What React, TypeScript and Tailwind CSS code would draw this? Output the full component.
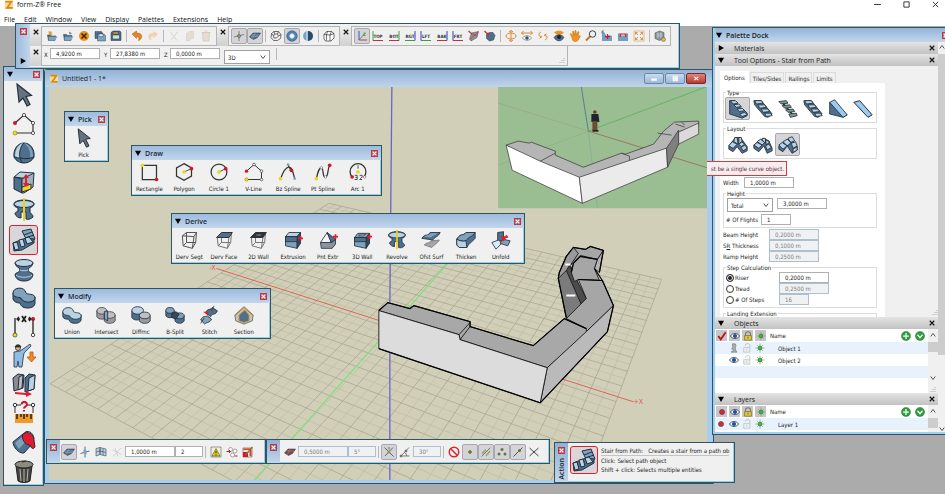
import React from "react";

type Kids = { children?: React.ReactNode };

const K = "#22303b";
const B1 = "#4f6f8c";
const B2 = "#7fa2bf";
const B3 = "#b9d2e4";

/* ---------- icon artwork, all on a 24 x 24 board ---------- */

const art: Record<string, React.ReactNode> = {
  arrow: <path d="M5 1l2 18 4-4 4 8 3-1.500-4-8 5.500-1z" fill="#66737f" stroke={K} strokeWidth="1.200" />,
  vline: (
    <g fill="none" stroke="#333" strokeWidth="1.200">
      <path d="M3 11L12 3l9 8v10H3" />
      <g strokeWidth=".8"><circle cx="12" cy="3" r="1.600" fill="#fff" /><circle cx="21" cy="11" r="1.600" fill="#fff" /><circle cx="21" cy="21" r="1.600" fill="#fff" /></g>
      <circle cx="3" cy="11" r="2" fill="#d4142a" stroke="none" /><circle cx="3" cy="21" r="2" fill="#f0e020" stroke="#887a00" strokeWidth=".6" />
    </g>
  ),
  dome: (
    <g stroke={K} strokeWidth="1">
      <path d="M2 16C1 8 6 2 12 2s11 6 10 14c-2 4-6 6-10 6S4 20 2 16z" fill={B1} />
      <path d="M3 15c0-7 4-12 8-13-3 4-4 10-3 15-2 0-3-1-5-2z" fill={B3} stroke="none" />
      <path d="M12 2c5 4 7 9 6 15 2 0 3-1 3-2 0-7-4-12-9-13z" fill={B2} stroke="none" />
      <path d="M12 2c-4 4-5 10-4 15 5 1 9 1 14-1M2 16c2 1 4 1 6 1 1 3 2 4 3 5" fill="none" />
    </g>
  ),
  cube: (
    <g stroke={K} strokeWidth="1">
      <path d="M2 7l6-5 14 1-4 6z" fill={B3} /><path d="M2 7l8 2v14l-8-4z" fill={B1} /><path d="M10 9l12-6-1 14-9 6-2 0z" fill="#9db4c6" />
      <path d="M10 17l9-3v5l-9 3z" fill="#ffcf20" /><path d="M11 8l3-4 3 4h-2v5h2l-3 4-3-4h2V8z" fill="#e21b2d" stroke="none" />
    </g>
  ),
  revolve: (
    <g stroke={K} strokeWidth="1">
      <path d="M2 6c0-2 4-4 10-4s10 2 10 4c0 3-3 3-4 4v5c2 1 3 2 3 4-2 2-5 3-7 2v-7H9v6c-3 0-5-2-6-4 0-2 2-2 3-3v-3C4 9 2 9 2 6z" fill={B1} />
      <ellipse cx="12" cy="6" rx="10" ry="3.500" fill={B3} /><path d="M12 0v23" stroke="#e8d31a" strokeWidth="2" />
    </g>
  ),
  stairs: (
    <g stroke={K} strokeWidth="1">
      <path d="M10 3l9-2 4 10-7 4z" fill={B2} /><path d="M12 7l8-3M13 10l9-3" />
      <path d="M1 15l13-5 8 1v4L10 22l-8 1z" fill={B1} />
      <path d="M1 15l4-1 2 7-4 1zM7 12l4-1 2 7-4 1zM13 10l4-1 4 5-6 2z" fill={B3} />
    </g>
  ),
  vase: (
    <g stroke={K} strokeWidth="1">
      <path d="M3 5c0 4 5 4 5 7S3 14 3 17c1 4 4 6 9 6s8-2 9-6c0-3-5-2-5-5s5-3 5-7z" fill={B1} />
      <ellipse cx="12" cy="5" rx="9" ry="3.500" fill={B3} /><path d="M4 17c3 3 13 3 16 0M8 12c2 1 6 1 8 0" fill="none" stroke={B3} />
    </g>
  ),
  blob: (
    <g stroke={K} strokeWidth="1">
      <path d="M1 7v6c1 3 4 4 7 4 1 4 4 5 8 5s7-2 7-5v-6z" fill={B1} />
      <path d="M1 7c0-6 12-7 13 0 1 2 9 0 9 5s-12 6-14 0C7 11 1 12 1 7z" fill={B2} />
    </g>
  ),
  dims: (
    <g stroke="#222" strokeWidth="1.300" fill="none">
      <path d="M3 3v18M21 3v18M5 4h3M16 4h3M7 2L5 4l2 2M17 2l2 2-2 2" /><path d="M10 1l4 6M14 1l-4 6" strokeWidth="1.800" />
      <circle cx="21" cy="4" r="2" fill="#c8102e" stroke="none" /><circle cx="3" cy="20" r="2" fill="#f0e020" strokeWidth=".6" /><circle cx="21" cy="20" r="1.700" fill="#fff" strokeWidth=".8" />
    </g>
  ),
  person: (
    <g stroke={K} strokeWidth=".8">
      <path d="M2 8l6-1 6-4 4-3 1 2-7 7-1 6-1 8H7l-1-6-1 6H2z" fill="#8fbce6" /><circle cx="6" cy="4" r="2.500" fill="#e5b48c" /><path d="M3 3c1-3 5-3 6 0z" fill="#3a2415" />
      <path d="M18 8h3v5h3l-4.500 5-4.500-5h3z" fill="#f08a24" stroke="#b85a08" />
    </g>
  ),
  slabs: (
    <g stroke={K} strokeWidth="1">
      <path d="M1 5l5-4 6 1-1 13-9 3z" fill="#8d8a94" /><path d="M7 4l4-2-1 13-4 2z" fill="#c1bec8" />
      <path d="M13 5l4-4 6 1-1 14-9 3z" fill={B1} /><path d="M17 5l6-3-1 14-6 2z" fill={B3} /><path d="M3 19l11 1v-2l6 3-6 3v-2l-11-1z" fill="#e21b2d" stroke="none" />
    </g>
  ),
  measure: (
    <g>
      <path d="M3 4v8M21 4v8M4 4h5M15 4h5" stroke="#333" fill="none" /><circle cx="3" cy="4" r="1.700" fill="#fff" stroke="#333" /><circle cx="21" cy="4" r="1.700" fill="#fff" stroke="#333" />
      <path d="M9.500 3.500c0-3.500 5.500-3.500 5.500 0 0 2-3 2-3 4M12 9v1.500" stroke="#d4142a" strokeWidth="2" fill="none" />
      <path d="M3 13h18v9H3z" fill="#f09a28" /><path d="M5 13v5M9 13v3M12 13v5M15 13v3M19 13v5" stroke="#222" strokeWidth="1.500" />
    </g>
  ),
  bucket: (
    <g stroke={K} strokeWidth="1">
      <path d="M1 12L11 4l9 10-8 9C7 24 1 17 1 12z" fill={B1} /><path d="M3 13l8-7 4 4-8 9z" fill={B2} stroke="none" />
      <path d="M11 4c4-4 11 0 11 6l1 7c-2 3-4 1-5-2-5 0-9-6-7-11z" fill="#e21b2d" /><path d="M12 4c1-4 9-4 10 5" fill="none" />
    </g>
  ),
  trash: (
    <g stroke="#222" strokeWidth="1">
      <path d="M4 7l2 15c3 2 9 2 12 0l2-15z" fill="#45433f" /><path d="M8 10l1 12M12 10v13M16 10l-1 12" stroke="#bbb8b0" /><ellipse cx="12" cy="5.500" rx="9" ry="3.500" fill="#8d8a80" /><path d="M10 3l4-1" />
    </g>
  ),
  rect: (
    <g><path d="M4 4h17v17H4z" fill="none" stroke="#333" strokeWidth="1.500" /><circle cx="4" cy="4" r="2.200" fill="#e6d81c" /><circle cx="21" cy="21" r="2.200" fill="#d4142a" /></g>
  ),
  polygon: (
    <g><path d="M12 2l9 5v10l-9 5-9-5V7z" fill="none" stroke="#333" strokeWidth="1.500" /><path d="M12 12l9-4" stroke="#333" /><circle cx="12" cy="12" r="2.200" fill="#e6d81c" /><circle cx="21" cy="8" r="2.200" fill="#d4142a" /></g>
  ),
  circle: (
    <g><circle cx="12" cy="12" r="9.500" fill="none" stroke="#333" strokeWidth="1.500" /><path d="M12 12l8-4" stroke="#333" /><circle cx="12" cy="12" r="2.200" fill="#e6d81c" /><circle cx="20" cy="8" r="2.200" fill="#d4142a" /></g>
  ),
  bz: (
    <g><path d="M3 20C6 12 9 6 13 6s5 6 7 14M12 3l4 8" fill="none" stroke="#333" strokeWidth="1.500" /><circle cx="3" cy="20" r="2.200" fill="#e6d81c" /><circle cx="16" cy="10" r="2.200" fill="#d4142a" /><circle cx="12" cy="3" r="1.600" fill={B2} /><circle cx="20" cy="20" r="1.600" fill={B2} /></g>
  ),
  pt: (
    <g><path d="M4 20C6 12 7 7 10 7s1 12 5 11 2-10 5-14" fill="none" stroke="#333" strokeWidth="1.500" /><circle cx="4" cy="20" r="2.200" fill="#e6d81c" /><circle cx="20" cy="4" r="2.200" fill="#d4142a" /><circle cx="10" cy="7" r="1.500" fill="#fff" stroke="#666" strokeWidth=".7" /><circle cx="15" cy="18" r="1.500" fill="#fff" stroke="#666" strokeWidth=".7" /></g>
  ),
  arc: (
    <g><path d="M5 18a9.500 9.500 0 1 1 14 0" fill="none" stroke="#333" strokeWidth="1.500" /><path d="M12 4v4M8 16h3v5H8M9 18.500h2M14 16h3v2l-3 3h3" stroke="#333" fill="none" /><circle cx="12" cy="12" r="2.200" fill="#e6d81c" /><circle cx="5" cy="18" r="2.200" fill="#d4142a" /><circle cx="20" cy="18" r="1.500" fill="#fff" stroke="#666" strokeWidth=".7" /></g>
  ),
  wire: <path d="M4 7l5-4h12l-3 5zM4 7l1 12 11 3 2-14M16 22l4-7 1-12M9 3v12l-4 4M9 15l11 0" fill="none" stroke="#555" strokeWidth="1.200" />,
  face: (
    <g stroke="#333" strokeWidth="1.200" fill="none"><path d="M4 9l1 10 11 3 2-13M16 22l4-7 1-12M9 9v6l-4 4M9 15h11" stroke="#777" /><path d="M3 9l6-6h13l-4 6z" fill={B1} /></g>
  ),
  wall2: (
    <g stroke="#333" strokeWidth="1.200" fill="none"><path d="M4 9l1 10 11 3 2-13M16 22l4-7 1-12M9 9v6l-4 4M9 15h11" stroke="#777" /><path d="M3 9l6-6h13l-4 6z" fill="#26333d" /><path d="M9 7l2-2h6l-2 2z" fill="#fff" /></g>
  ),
  extr: (
    <g stroke={K} strokeWidth="1"><path d="M3 8l4-5h14l-4 5z" fill={B3} /><path d="M3 8h14v14L3 19z" fill={B2} /><path d="M17 8l4-5v13l-4 6z" fill="#34495c" /><path d="M3 8h14v6H3z" fill={B1} /><path d="M21 7v6M18 10h6" stroke="#e21b2d" strokeWidth="2" /></g>
  ),
  pnt: (
    <g stroke={K} strokeWidth="1"><path d="M3 15h14l4-4v6l-4 5H4z" fill="#8a959f" /><path d="M11 3L3 15h13z" fill="#f3f5f7" /><path d="M11 3l5 12 5-4z" fill={B1} /><path d="M21 5v6M18 8h6" stroke="#e21b2d" strokeWidth="2" /></g>
  ),
  wall3: (
    <g stroke={K} strokeWidth="1"><path d="M3 9l4-5h14l-4 5z" fill={B2} /><path d="M3 9h14v13L3 19z" fill={B2} /><path d="M17 9l4-5v12l-4 6z" fill="#34495c" /><path d="M3 9h14v5H3z" fill={B1} /><path d="M8 7l2-2h6l-2 2z" fill="#fff" /><path d="M21 5v6M18 8h6" stroke="#e21b2d" strokeWidth="2" /></g>
  ),
  ofst: (
    <g stroke={K} strokeWidth="1"><path d="M4 18c4-5 4 0 8-5l10-1c-3 5-5 4-9 9z" fill="#a5a5ad" stroke="#777" /><path d="M1 10c5-7 6-1 10-7l12 0c-3 6-5 4-9 9z" fill={B1} /><path d="M4 8c3-2 5-1 8-4h8c-3 3-5 2-8 5z" fill={B2} stroke="none" /></g>
  ),
  thick: (
    <g stroke={K} strokeWidth="1"><path d="M1 11c5-8 7-3 11-8h11v7c-4 5-6 4-10 11H4l-3-3z" fill={B1} /><path d="M1 11c5-8 7-3 11-8h11c-4 6-7 4-11 10-4 1-8 0-11-2z" fill={B2} /><path d="M1 11c3 2 7 3 11 2l1 8H4l-3-3z" fill={B3} /></g>
  ),
  unfold: (
    <g stroke={K} strokeWidth="1"><path d="M8 3l7-1v10l-7 2z" fill={B1} /><path d="M1 15l8-3 4 4-7 7z" fill="#dcebf4" /><path d="M14 11l9 2-3 6-9-3z" fill={B2} /><path d="M19 6l-4 2-3-1 2 7 4-3-1-1 4-1z" fill="#e21b2d" stroke="none" /></g>
  ),
  union: (
    <g stroke={K} strokeWidth="1"><path d="M1 8v6c1 3 4 3 7 3 1 4 4 5 8 5s7-2 7-5v-5z" fill={B1} /><path d="M1 8c0-6 12-7 13 0 1 2 9 0 9 5s-12 6-14 0C7 12 1 13 1 8z" fill={B3} /></g>
  ),
  inter: (
    <g stroke="#444" strokeWidth="1"><path d="M1 7v7c2 4 10 4 12 0V7z" fill="#9a9aa2" /><ellipse cx="7" cy="7" rx="6" ry="4" fill="#bfbfc5" /><path d="M10 12v7c2 4 11 4 13 0v-7z" fill="#9a9aa2" /><ellipse cx="16.500" cy="12" rx="6.500" ry="4" fill="#bfbfc5" /><path d="M10 8l4-1v12l-4-2z" fill={B2} stroke={K} /></g>
  ),
  diff: (
    <g stroke={K} strokeWidth="1"><path d="M1 7v8c2 4 10 4 12 0V7z" fill={B1} /><ellipse cx="8" cy="6.500" rx="7" ry="4.500" fill={B3} /><path d="M10 13v6c2 4 11 4 13 0v-6z" fill="#9a9aa2" /><ellipse cx="16.500" cy="12.500" rx="6.500" ry="4" fill="#bfbfc5" /></g>
  ),
  split: (
    <g stroke={K} strokeWidth="1"><path d="M1 7v6c2 3 8 3 10 0V7z" fill={B1} /><ellipse cx="6" cy="6.500" rx="5" ry="3.500" fill={B2} /><path d="M12 13v6c2 4 9 4 11 0v-6z" fill={B1} /><ellipse cx="17.500" cy="13" rx="5.500" ry="3.500" fill={B2} /><path d="M8 10l5-2 4 3-4 6-5-2z" fill="#34495c" /></g>
  ),
  stitch: (
    <g stroke={K} strokeWidth="1"><path d="M8 9c3-6 5-2 8-6l6 4c-2 6-6 2-8 7z" fill={B1} /><path d="M2 18c3-6 5-3 8-5l5 4c-2 5-6 3-8 6z" fill={B2} /><path d="M18 1l-3 6M6 16l-4 6" stroke="#333" /><path d="M5 8h6v5z" fill="#e21b2d" stroke="none" /></g>
  ),
  section: (
    <g stroke="#666" strokeWidth="1"><path d="M1 12L12 2l11 10-1 7-10 4-10-4z" fill="#c3c4c6" /><path d="M1 13L12 3l11 10" fill="none" stroke="#b98a2a" strokeWidth="1.200" /><path d="M6 12l7-6 5 6v7l-6 2-6-2z" fill={B1} stroke="#c9962c" strokeWidth="1.200" /></g>
  ),
  open: (
    <g><path d="M3 10h6l2 2h9l-2 9H5z" fill={B1} stroke={K} /><path d="M5 14l18-1-5 8H6z" fill={B2} /><path d="M4 3h7v4h3l-5 4-5-4h3z" fill="#e8951c" /></g>
  ),
  open2: (
    <g><path d="M3 9h6l2 2h9l-2 10H5z" fill={B1} stroke={K} /><path d="M5 14l18-1-5 8H6z" fill={B2} /><path d="M14 3l6 4-5 2z" fill="#777" /></g>
  ),
  closef: (
    <g><circle cx="12" cy="12" r="10" fill="#e8921a" /><path d="M7 7l10 10M17 7L7 17" stroke="#40240a" strokeWidth="3" /></g>
  ),
  copyf: (
    <g stroke={K} strokeWidth=".8"><path d="M2 3h13l2 3v11H2z" fill={B1} /><path d="M7 8h13l3 3v11H7z" fill={B2} /><path d="M10 8h8v5h-8z" fill="#eef" /></g>
  ),
  save: (
    <g stroke={K} strokeWidth="1"><path d="M2 5l4-3h14l2 3v16H2z" fill={B1} /><path d="M5 10h14v8H5z" fill="#d8dde2" /><path d="M6 4h11v4H6z" fill="#e8a83c" /></g>
  ),
  undo: <path d="M2 8l9-6v4c8 0 12 4 10 9-1 3-3 5-6 6 2-5 1-8-4-8v4z" fill="#e8841a" stroke="#8d4a08" strokeWidth=".8" />,
  redo: <path d="M22 8l-9-6v4C5 6 1 10 3 15c1 3 3 5 6 6-2-5-1-8 4-8v4z" fill="#f2d2b0" />,
  cut: <path d="M4 3l14 18M20 3L5 21" stroke="#dcd3c8" strokeWidth="2" />,
  dup: <path d="M5 7l6-4h8v14h-7v4H5z" fill="#e5ddd2" stroke="#d2c8ba" />,
  bin: <path d="M5 5h14l-1 17H6zM3 5h18M9 2h6" fill="#e5ddd2" stroke="#d2c8ba" strokeWidth="1.500" />,
  axis: <g stroke="#5c6a50" strokeWidth="1.500"><path d="M12 2v20M2 14l20-5" /><circle cx="12" cy="12" r="3" fill="#9aa868" /></g>,
  plane: <g><path d="M1 14L8 6h15l-6 9-8 4z" fill={B1} stroke={K} /><path d="M5 10h15M4 13l14 0M12 6L7 17" stroke="#9fb4c6" /></g>,
  planer: <g><path d="M1 14L8 6h15l-6 9-8 4z" fill="#7a4a50" stroke={K} /><path d="M5 10h15M12 6L7 17" stroke="#c88" /></g>,
  ring: <g fill="none" stroke="#444" strokeWidth="1.500"><path d="M8 3h9l5 6-1 8-6 4H7l-5-6 1-8z" /><path d="M9 8h6l2 4-4 4H8l-1-4zM8 3l1 5M17 3l-2 5M22 9l-5 3M3 7l4 5" /></g>,
  donut: <g><circle cx="12" cy="12" r="10.500" fill="#4f82b4" stroke="#2c4a68" /><circle cx="12" cy="12" r="4.500" fill="#fff" stroke={B3} strokeWidth="2" /></g>,
  half: <g><circle cx="12" cy="12" r="10" fill="#a7c6e4" /><path d="M12 2a10 10 0 0 1 0 20z" fill="#2c4a68" /><path d="M8 3a10 10 0 0 0 0 18z" fill={B2} /></g>,
  wcube: <g fill="none" stroke="#333" strokeWidth="1.400"><path d="M2 9l5-6h10l5 4v9l-6 6H5l-3-4z" fill="#fff" /><path d="M2 9l12 1 8-3M14 10v12M9 3l-2 6v12M17 3l-3 7" /></g>,
  view3: <g fill="none" strokeWidth="1.800"><path d="M6 2v18" stroke="#333fc0" /><path d="M6 20h16" stroke="#c03048" /><path d="M6 20L17 7M15 6h4l-4 5h4" stroke="#3aa040" /></g>,
  eyecube: <g><path d="M3 18l4-12 14-3-3 12-12 7z" fill="#8c948c" stroke="#444" /><path d="M5 18L21 4M8 8l9 3" stroke="#c03048" strokeWidth="1.500" /><path d="M1 2l7 6" stroke="#c03048" strokeWidth="2.500" /></g>,
  eyeball: <g><path d="M5 9l6-4h7l4 6-3 9-8 2-6-5z" fill={B1} stroke={K} /><path d="M1 2l9 9M5 6l6 1" stroke="#c03048" strokeWidth="2.500" /></g>,
  orbit: <g fill="none" stroke="#d98a30" strokeWidth="2"><ellipse cx="12" cy="12" rx="10" ry="6" /><path d="M12 1v22M8 4l4-3 4 3M8 20l4 3 4-3" /></g>,
  look: <g><path d="M1 6h22M5 2L1 6l4 4M19 2l4 4-4 4" stroke="#d98a30" strokeWidth="2" fill="none" /><path d="M3 16c5-6 13-6 18 0-5 6-13 6-18 0z" fill="#fff" stroke={K} /><circle cx="12" cy="16" r="3.500" fill="#2f5278" /></g>,
  turn: <g fill="none" stroke="#d98a30" strokeWidth="2"><path d="M8 4c-6 2-5 9 1 10l-3-3m3 3l-4 2" /><path d="M16 20c6-2 5-9-1-10l3 3m-3-3l4-2" /></g>,
  eyecam: <g><path d="M2 5c5-5 15-5 20 0l-4 3H6z" fill="#e8951c" /><path d="M2 15c5-8 15-8 20 0-5 9-15 9-20 0z" fill={B1} stroke={K} /><circle cx="12" cy="14" r="4" fill="#222" /></g>,
  hand: <path d="M5 13L2 8l2-1 4 4-1-8 2-1 2 8 1-9h2l1 9 3-7 2 1-2 9 3-2 2 1-5 9c-3 3-9 3-11-1z" fill="#f0921e" stroke="#b86408" strokeWidth=".8" />,
  loupe: <g><path d="M11 12L2 21" stroke="#c8761c" strokeWidth="4" /><circle cx="15" cy="8" r="6.500" fill="#e8f1fa" stroke="#333" strokeWidth="1.800" /></g>,
  winz: <g><path d="M2 3v19h20V12l-6-2-5 3-4-8z" fill="#6fa0c0" /><path d="M13 8v10M8 13h10" stroke="#d4142a" strokeWidth="2.500" /><path d="M2 2v5M2 2h4" stroke="#555" strokeWidth="1.500" /></g>,
  wing: <g><path d="M2 7v15h20V7l-5 4H7z" fill="#6fa0c0" /><path d="M3 8h18M8 8l-2 6M16 8l2 6" stroke="#d4142a" strokeWidth="2" /></g>,
  fit: <g fill="none" stroke="#d98a30" strokeWidth="1.800"><path d="M2 2h20v20H2z" stroke="#d9b98a" /><path d="M5 5l5 5M19 5l-5 5M5 19l5-5M19 19l-5-5M5 9V5h4M15 5h4v4M5 15v4h4M19 15v4h-4" /></g>,
  snap: <g><path d="M2 6l9-4 9 3v12l-9 4-9-4z" fill="#8c9298" stroke="#444" /><path d="M5 8h12M5 12h12M8 5v12M14 5v12" stroke="#e0e4e8" /><circle cx="19" cy="19" r="4" fill="#d8c040" stroke="#555" /></g>,
  grid: <g stroke={K}><path d="M2 5l8-2v14l-8 3zM10 3l12 3v14l-12-3z" fill={B3} /><path d="M2 12l8-2 12 3M16 5v14" fill="none" /></g>,
  pole: <g><path d="M12 1v22M3 15l18-5" stroke={B1} strokeWidth="2" /><path d="M9 7l6 2v8l-6-2z" fill={B2} /></g>,
  dim: <path d="M4 21L20 4M3 8l18 9M8 4l6 17" stroke="#c6c9cc" strokeWidth="1.500" />,
  warn: <g><path d="M2 2h20v20H2z" fill="#eef0d8" stroke="#444" /><path d="M4 20l8-15 8 15z" fill="#e8d414" stroke="#333" /><path d="M12 10v5M12 17v2" stroke="#222" strokeWidth="2" /></g>,
  cluster: <g fill="#fff" stroke="#777" strokeWidth="1.300"><circle cx="9" cy="7" r="4" /><circle cx="18" cy="10" r="4" /><circle cx="13" cy="18" r="4" /><path d="M1 11h8M6 8l3 3-3 3M17 20h6" stroke="#d4142a" strokeWidth="2" fill="none" /></g>,
  redgrid: <g><path d="M2 4h18v18H2z" fill="#f0ece4" stroke="#333" /><path d="M2 12h10v10H2z" fill="#d4142a" /><path d="M3 5h15v3H3zM15 8h4v12h-4z" fill="#d4442a" /><path d="M7 18L21 2" stroke="#9a6a20" strokeWidth="2.500" /></g>,
  snapx: <g stroke="#555" strokeWidth="1.800"><path d="M3 3l18 18M20 3L4 20M12 2v5" /><circle cx="12" cy="12" r="3" fill="#7d9a4e" stroke="none" /></g>,
  angle: <g stroke="#555" strokeWidth="1.500" fill="none"><path d="M20 3L4 20h17M11 13c3 1 4 4 4 7" /><circle cx="4" cy="20" r="2" fill="#7d9a4e" /><circle cx="14" cy="10" r="2" fill="#999" /></g>,
  no: <g fill="none" stroke="#d8252e" strokeWidth="3"><circle cx="12" cy="12" r="9.500" /><path d="M5 5l14 14" /></g>,
  dot: <path d="M12 8v8M8 12h8" stroke="#5d7a3a" strokeWidth="3" />,
  seg: <g><path d="M3 21L21 3" stroke="#555" strokeWidth="1.500" /><path d="M3 13l8-7 2 3-8 8zM11 18l8-9 2 3-8 9z" fill="#9db06a" /></g>,
  dots3: <g fill="#5d7a3a"><circle cx="12" cy="7" r="3" /><circle cx="6" cy="16" r="3" /><circle cx="18" cy="16" r="3" /></g>,
  mid: <g><path d="M3 21L21 3" stroke="#444" strokeWidth="1.800" /><circle cx="15" cy="9" r="3" fill="#5d7a3a" /></g>,
  cross: <path d="M3 4l18 16M21 4L3 20" stroke="#444" strokeWidth="2" />,
  eye: <g><path d="M1 12c5-8 17-8 22 0-5 8-17 8-22 0z" fill="#fff" stroke="#24406a" strokeWidth="2" /><circle cx="12" cy="12" r="5" fill="#24508c" /></g>,
  ghost: <path d="M8 2h7l2 4-2 6 1 5 3 5H5l5-4-1-4-3 0 3-4z" fill="#a9aeb2" stroke="#73787c" strokeWidth="1.500" />,
  lock: <g stroke="#66580c" strokeWidth="1.500"><path d="M6 11V7c0-7 12-7 12 0v4" fill="none" stroke="#777" strokeWidth="2.500" /><path d="M4 11h16v11H4z" fill="#e6cf3c" /><path d="M12 14v4" stroke="#333" strokeWidth="2" /></g>,
  unlock: <g stroke="#b4b7ba" strokeWidth="1.500"><path d="M8 7V6c0-6 11-6 11 0v5" fill="none" strokeWidth="2" /><path d="M4 11h15v11H4z" fill="#eceef0" /><path d="M11 14v4" /></g>,
  spot: <g stroke="#555" strokeWidth="1.500"><path d="M12 1v22M1 12h22M5 5l14 14M19 5L5 19" stroke="#6f9b56" /><circle cx="12" cy="12" r="4.500" fill="#35b83c" stroke="#2b7a2e" /></g>,
  check: <path d="M3 12l6 8L21 3" stroke="#c01818" strokeWidth="4.500" fill="none" />,
  red: <circle cx="12" cy="12" r="6" fill="#c23440" stroke="#7c1820" strokeWidth="1.500" />,
  plus: <g><circle cx="12" cy="12" r="11" fill="#2f9a3e" stroke="#1c6a28" /><path d="M12 5v14M5 12h14" stroke="#fff" strokeWidth="3" /></g>,
  down: <g><circle cx="12" cy="12" r="11" fill="#2f9a3e" stroke="#1c6a28" /><path d="M6 9l6 7 6-7" stroke="#fff" strokeWidth="3" fill="none" /></g>,
  st1: <g stroke={K} strokeWidth="1"><path d="M2 2v16l15 5 6-3v-3l-4-4-4-2-3-4-3-2-1-3z" fill={B1} /><path d="M3 2l6 0 3 3-6 1zM7 7l6-1 3 3-6 1zM11 12l6-1 3 3-6 1zM14 18l6-2 3 3-6 2z" fill={B3} /></g>,
  st2: <g stroke={K} strokeWidth="1"><path d="M1 2l9 0 13 16-5 4-4-1L2 7z" fill={B1} /><path d="M2 2l8 0 2 3-8 1zM6 7l8 0 2 3-8 1zM10 12l8 0 2 3-8 1zM14 17l7 0 2 3-7 1z" fill={B3} /></g>,
  st3: <g stroke={K} strokeWidth="1"><path d="M5 4l12 14" strokeWidth="2" /><path d="M1 3l9-1 2 3-8 1zM5 8l9-1 2 3-8 1zM9 13l9-1 2 3-8 1zM13 18l9-1 1 3-8 2z" fill="#7f9a8c" /></g>,
  ramp1: <g stroke={K} strokeWidth="1"><path d="M2 4v14l16 4 5-3z" fill={B1} /><path d="M2 4l6-3 15 18-5 3z" fill="#9ccaf0" /></g>,
  ramp2: <path d="M1 4l7-2 15 17-5 3z" fill="#9ccaf0" stroke={K} strokeWidth="1.200" />,
  lay1: <g stroke={K} strokeWidth="1"><path d="M1 13l8-10h6l8 11v5l-6 3-6-8-5 6-5-3z" fill={B1} /><path d="M1 13l4-5 6 3-5 5zM8 3h3l1 8-5-3zM13 3h3l1 5-4 3zM16 8l4 3-4 3-3-3zM20 12l3 4-5 3-2-4z" fill={B3} /></g>,
  lay2: <g stroke={K} strokeWidth="1"><path d="M1 12l5-4 7-4 6 3 4 9v3l-6 3-4-9-6 7-6-4z" fill={B1} /><path d="M1 12l4-3 6 3-4 4zM5 8l4-3 5 4-3 3zM11 4l4 0 0 6-4-4zM15 6l5 2-4 4zM19 11l3 4-5 3-2-5z" fill={B3} /></g>,
  lay3: <g stroke={K} strokeWidth="1"><path d="M1 13L15 3l8 11v4l-6 4-6-9-5 7-5-3z" fill={B1} /><path d="M1 12l4-3 6 4-5 4zM6 8l5-3 5 4-5 4zM12 4l5-2 3 5-5 2zM16 10l5-2 2 5-5 3zM18 17l5-3v4l-5 3z" fill={B3} /></g>,
};

const Icon = ({ name, className = "size-3" }: { name: string; className?: string }) => (
  <svg viewBox="0 0 24 24" className={`${className} shrink-0`} aria-hidden="true">{art[name]}</svg>
);

/* Two-axis badge with its view name between the axes */
const ViewBadge = ({ label, a, b, flip }: { label: string; a: string; b: string; flip?: boolean }) => (
  <svg viewBox="0 0 24 24" className="size-3 shrink-0" aria-hidden="true">
    <path d={flip ? "M22 2v19" : "M2 2v19"} stroke={a} strokeWidth="2" />
    <path d="M2 21h20" stroke={b} strokeWidth="2" />
    <text x="12" y="15" textAnchor="middle" fontSize="9" fontWeight="700" fill="#333">{label}</text>
  </svg>
);

/* ---------- small shared controls ---------- */

const CloseBox = () => (
  <button type="button" aria-label="Close" className="flex size-[7px] shrink-0 items-center justify-center border border-[#b23c46] bg-[#cf4e57]">
    <svg viewBox="0 0 8 8" className="size-[5px]"><path d="M1 1l6 6M7 1L1 7" stroke="#fff" strokeWidth="2" /></svg>
  </button>
);

const Cross = () => (
  <button type="button" aria-label="Close" className="flex size-2 shrink-0 items-center justify-center">
    <svg viewBox="0 0 8 8" className="size-[6px]"><path d="M1 1l6 6M7 1L1 7" stroke="#111" strokeWidth="1.500" /></svg>
  </button>
);

const Tri = ({ right }: { right?: boolean }) => (
  <svg viewBox="0 0 8 8" className="size-[6px] shrink-0" aria-hidden="true"><path d={right ? "M1 0v8l7-4z" : "M0 1h8l-4 7z"} fill="#000" /></svg>
);

const Chevron = ({ up }: { up?: boolean }) => (
  <svg viewBox="0 0 8 8" className="size-[6px] shrink-0" aria-hidden="true"><path d={up ? "M1 6l3-4 3 4" : "M1 2l3 4 3-4"} fill="none" stroke="#444" strokeWidth="1.200" /></svg>
);

const Sizer = () => (
  <svg viewBox="0 0 6 6" className="size-[6px] shrink-0" aria-hidden="true"><path d="M5 0v1M5 2v1M5 4v1M3 2v1M3 4v1M1 4v1" stroke="#b0b0b0" /></svg>
);

const Sep = () => <span className="mx-[2px] h-3 w-px shrink-0 bg-[#b8b8b8]" />;

const Tool = ({ name, on, label }: { name: string; on?: boolean; label?: string }) => (
  <button type="button" aria-label={label ?? name} aria-pressed={!!on} className={`flex size-4 shrink-0 items-center justify-center rounded-[2px] ${on ? "border border-[#a9a9ad] bg-[#d4d3d8]" : ""}`}>
    <Icon name={name} />
  </button>
);

const Field = ({ label, value, w, off }: { label: string; value: string; w: string; off?: boolean }) => (
  <input aria-label={label} defaultValue={value} disabled={off} className={`${w} h-[11px] shrink-0 border pl-[5px] ${off ? "border-[#aebfd2] bg-[#f0f1f3] text-[#7c7c7c]" : "border-[#b0b0b0] bg-white text-[#222]"}`} />
);

const Drop = ({ label, value, w }: { label: string; value: string; w: string }) => (
  <span className={`${w} relative flex h-[14px] shrink-0 items-center border border-[#a0a0a0] bg-white`}>
    <select aria-label={label} className="w-full appearance-none bg-transparent pl-[3px] outline-none"><option>{value}</option></select>
    <span className="pointer-events-none absolute right-[3px]"><Chevron /></span>
  </span>
);

const frame = "absolute border border-[#2f5563] bg-[#f0f0f0] shadow-[inset_-1px_-1px_0_#8fd0e6]";

const Palette = ({ title, place, children }: Kids & { title: string; place: string }) => (
  <section className={`${frame} ${place} flex flex-col`}>
    <header className="flex h-[14px] shrink-0 items-center gap-[4px] bg-linear-to-b from-[#9dbbdd] to-[#c2d6ec] px-[3px] font-['Open_Sans',sans-serif] text-[7px] font-semibold text-[#1c2836]">
      <Tri /><h2 className="flex-1 whitespace-nowrap">{title}</h2><CloseBox />
    </header>
    {children}
  </section>
);

const ToolGrid = ({ items, pad = "pr-[6px]" }: { items: [string, string][]; pad?: string }) => (
  <div className={`flex flex-1 pt-[2px] ${pad}`}>
    {items.map(([icon, text]) => (
      <button type="button" key={text} className="flex flex-1 basis-0 flex-col items-center gap-[2px] whitespace-nowrap">
        <Icon name={icon} className="size-5" /><span className="leading-[9px]">{text}</span>
      </button>
    ))}
  </div>
);

/* ---------- 3D scene ---------- */

const quad = { a: [50, 383], b: [328, 203], c: [660, 279], d: [527, 636] };

function project(u: number, v: number): [number, number] {
  const { a, b, c, d } = quad;
  const dx1 = b[0] - c[0], dx2 = d[0] - c[0], dx3 = a[0] - b[0] + c[0] - d[0];
  const dy1 = b[1] - c[1], dy2 = d[1] - c[1], dy3 = a[1] - b[1] + c[1] - d[1];
  const det = dx1 * dy2 - dx2 * dy1;
  const g = (dx3 * dy2 - dx2 * dy3) / det;
  const h = (dx1 * dy3 - dx3 * dy1) / det;
  const w = g * u + h * v + 1;
  return [
    ((b[0] - a[0] + g * b[0]) * u + (d[0] - a[0] + h * d[0]) * v + a[0]) / w,
    ((b[1] - a[1] + g * b[1]) * u + (d[1] - a[1] + h * d[1]) * v + a[1]) / w,
  ];
}

const gridPath = (odd: boolean) => {
  let out = "";
  for (let i = odd ? 1 : 0; i <= 40; i += 2) {
    const t = i / 40;
    const ends = [project(t, 0), project(t, 1), project(0, t), project(1, t)].map((p) => p.map((n) => n.toFixed(1)).join(" "));
    out += `M${ends[0]}L${ends[1]}M${ends[2]}L${ends[3]}`;
  }
  return out;
};

const Scene = () => (
  <svg viewBox="49 87 658 392" preserveAspectRatio="xMinYMin slice" className="size-full bg-[#d2cfb9]" role="img" aria-label="Perspective view">
    <path d={gridPath(true)} stroke="#bebca6" strokeWidth=".7" />
    <path d={gridPath(false)} stroke="#a9a894" strokeWidth=".8" />
    <path d="M216 268L632 401" stroke="#e0584c" strokeWidth=".9" />
    <path d="M250 484L447 263" stroke="#7ee07c" strokeWidth="1.200" />
    <path d="M391 87L389 302M389 351v130" stroke="#6a66c4" strokeWidth="1.300" />
    <text x="632" y="403" fontSize="7" fill="#e0584c">+X</text>
    <text x="209" y="270" fontSize="7" fill="#e0584c">-X</text>

    <g stroke="#1a1a1a" strokeWidth=".9" strokeLinejoin="round">
      <path d="M565 256l7-9 12 2 5-3 13 4-6 9-17-4-9 9z" fill="#a6a6a6" />
      <path d="M596 259l6-9-4 22-5-4z" fill="#b5b5b5" />
      <path d="M557 278l1-6 7-16 7-9 5 6-8 12 5 10z" fill="#9a9a9a" />
      <path d="M568 265l4 8 13 25-6 8-16-32z" fill="#4c4c4c" />
      <path d="M557 278l8-8 15 34-10 10-5 4z" fill="#7b7b7b" />
      <path d="M570 272l2-9 7-7 17 3-3 9 5 12-21-1-4 2z" fill="#a6a6a6" />
      <path d="M577 279l24 1 11 25-28 27-1-5-18-9 20-20z" fill="#a6a6a6" />
      <path d="M378 310l9-8 22 6 4-3 56 16v5l63 19 31-27 22 10v4l-39 35-87-28-1-5z" fill="#a8a8a8" />
      <path d="M546 367l39-36 27-26-6 26-67 71z" fill="#bababa" />
      <path d="M378 310l80 24 1 5 87 28-7 35-161-54z" fill="#dcdcdc" />
      <path d="M458 334l11-12M459 339l10-13" fill="none" />
    </g>
    <path d="M378 348l161 54 67-71 6-26-11-25-24-1M378 310l9-8 22 6 4-3 56 16v5l63 19 31-27 22 10M565 317l-8-39 1-6 7-16 7-9 12 2 5-3 13 4-4 22M570 272l2-9 7-7 17 3M593 268l8 12" fill="none" stroke="#000" strokeWidth="1.200" />
    <path d="M565 294h9v2h-9zM564 263h5v2h-5z" fill="#fff" />

    <path d="M497 87h210v121H497z" fill="#9bbd92" />
    <g fill="none" strokeWidth=".7">
      <path d="M580 87l7 44" stroke="#41618c" /><path d="M587 131l9 77" stroke="#83a996" />
      <path d="M587 131l117-44" stroke="#4fae50" /><path d="M497 165l90-34" stroke="#8cb383" />
      <path d="M587 131l120 37" stroke="#a35a44" /><path d="M497 103l90 28" stroke="#93a884" />
    </g>
    <g stroke="#333" strokeWidth=".7" strokeLinejoin="round">
      <path d="M505 145l12-4 11 2 2-1 24 9v4l28 12 38-14 4 1 28-10 10-13 11-9 24-1v4l-18 6-2 3-12 18-87 29-39-16z" fill="#b5b5b5" />
      <path d="M505 145l34 16 39 16 3 26-70-33z" fill="#fff" />
      <path d="M578 177l87-29 1 19-85 36z" fill="#ebebeb" />
      <path d="M665 148l12-18v14l-11 23z" fill="#7f7f7f" />
      <path d="M677 132l20-9v11l-20 10z" fill="#dadada" />
      <path d="M539 161l15-8M620 153l8 3v4M656 133l14 2M674 124l9 3M680 122l3 3" fill="none" />
    </g>
    <g><circle cx="593.500" cy="112" r="1.800" fill="#5a4632" /><path d="M590 114h7l1 8h-8z" fill="#20242c" /><path d="M591 121h5v9h-5z" fill="#6b4b32" /><path d="M591 130h6v1.500h-6z" fill="#111" /></g>
  </svg>
);

/* ---------- dock ---------- */

const Bar = ({ title, closed }: { title: string; closed?: boolean }) => (
  <header className="flex h-[12px] shrink-0 items-center bg-linear-to-b from-[#e4e4e4] to-[#c2c2c2] pr-[2px] pl-[3px] font-['Open_Sans',sans-serif] text-[7px] text-[#222]">
    <Tri right={closed} /><h3 className="ml-[10px] flex-1">{title}</h3><Cross />
  </header>
);

const Group = ({ title, children }: Kids & { title: string }) => (
  <fieldset className="relative mt-[5px] border border-[#dcdcdc] px-px pt-[4px] pb-[2px]">
    <legend className="absolute -top-[5px] left-[2px] bg-white px-px leading-[9px]">{title}</legend>
    {children}
  </fieldset>
);

const Pic = ({ name, on }: { name: string; on?: boolean }) => (
  <button type="button" aria-label={name} aria-pressed={!!on} className={`flex h-[23px] w-[25px] shrink-0 items-center justify-center rounded-[2px] ${on ? "border border-[#a9a9ad] bg-[#d6d5da]" : ""}`}>
    <Icon name={name} className="size-5" />
  </button>
);

const Choice = ({ label, value, w, on }: { label: string; value: string; w: string; on?: boolean }) => (
  <div className="flex h-[11px] items-center pl-px">
    <label className="flex w-[53px] items-center gap-px">
      <input type="radio" name="step" defaultChecked={on} className="size-2 appearance-none rounded-full border border-[#333] bg-white checked:bg-[#222] checked:shadow-[inset_0_0_0_1px_#fff]" />{label}
    </label>
    <Field label={label} value={value} w={w} off={!on} />
  </div>
);

const Disabled = ({ label, value }: { label: React.ReactNode; value: string }) => (
  <label className="flex h-[11px] items-center"><span className="w-[46px]">{label}</span><input disabled defaultValue={value} className="h-[11px] w-[50px] border border-[#aebfd2] bg-[#f0f1f3] pl-[5px] text-[#7c7c7c]" /></label>
);

const List = ({ lead, rows, blanks, height }: { lead: string; rows: [string, string, string][]; blanks: number; height: string }) => (
  <div className={`flex ${height} shrink-0 overflow-hidden bg-white`}>
    <table className="h-max flex-1 border-collapse self-start">
      <thead>
        <tr className="h-[13px] text-left">
          {[lead, "eye", "lock", "spot"].map((n) => (
            <th key={n} className="w-[13px] p-0 pl-px"><span className="flex h-[11px] w-[11px] items-center justify-center bg-[#c8c6c8]"><Icon name={n} className="size-[10px]" /></span></th>
          ))}
          <th className="p-0 pl-[3px] font-normal">Name</th>
          <th className="w-[27px] p-0"><span className="flex gap-1"><button type="button" aria-label="Add"><Icon name="plus" className="size-[10px]" /></button><button type="button" aria-label="Menu"><Icon name="down" className="size-[10px]" /></button></span></th>
        </tr>
      </thead>
      <tbody>
        {rows.map(([mark, vis, text], i) => (
          <tr key={text} className={`h-[12px] ${i % 2 ? "bg-white" : "bg-[#e8f2fd]"}`}>
            <td className="p-0 pl-px">{mark && <Icon name={mark} className="size-[10px]" />}</td>
            <td className="p-0 pl-px"><Icon name={vis} className="size-[10px]" /></td>
            <td className="p-0 pl-px"><Icon name="unlock" className="size-[10px]" /></td>
            <td className="p-0 pl-px"><Icon name="spot" className="size-[10px]" /></td>
            <td className="p-0 pl-[11px]" colSpan={2}>{text}</td>
          </tr>
        ))}
        {Array.from({ length: blanks }, (_, i) => <tr key={i} className="h-[12px] bg-[#e8f2fd]"><td colSpan={6} /></tr>)}
      </tbody>
    </table>
    <div className="flex w-[10px] flex-col items-center bg-[#f0f0f0] pt-[3px]"><Chevron up /><span className="mt-1 h-[10px] w-full bg-[#cdcdcd]" />{blanks > 0 && <span className="mt-auto flex flex-col items-center gap-[6px]"><Chevron /><Sizer /></span>}</div>
  </div>
);

const Dock = () => (
  <aside className="absolute top-[1px] right-0 flex w-[233px] flex-col border-y border-l border-[#2f5563] bg-[#9fd0ee] pb-[2px] pl-[2px]">
    <header className="flex h-[14px] items-center gap-[4px] bg-linear-to-b from-[#93b4d8] to-[#c2d6ec] pl-px font-['Open_Sans',sans-serif] text-[7px] font-semibold">
      <Tri /><h2 className="flex-1">Palette Dock</h2><span className="-mr-1"><CloseBox /></span>
    </header>
    <div className="flex bg-[#f0f0f0]">
      <div className="min-w-0 flex-1">
        <Bar title="Materials" closed />
        <Bar title="Tool Options - Stair from Path" />
        <div className="relative flex h-[251px] flex-col overflow-hidden pt-[5px] pr-[53px] pl-[5px]">
          <div role="tablist" className="flex h-[12px] shrink-0 items-end gap-px">
            {["Options", "Tiles/Sides", "Railings", "Limits"].map((t, i) => (
              <button type="button" role="tab" aria-selected={!i} key={t} className={i ? "h-[11px] border border-b-0 border-[#dcdcdc] px-[2px]" : "h-[12px] bg-white px-[4px]"}>{t}</button>
            ))}
          </div>
          <div className="shrink-0 bg-white pt-[4px] pr-[8px] pl-[3px]">
            <Group title="Type"><div className="flex">{["st1", "st2", "st3", "st2", "ramp1", "ramp2"].map((n, i) => <Pic key={i} name={n} on={!i} />)}</div></Group>
            <Group title="Layout"><div className="flex"><Pic name="lay1" /><Pic name="lay2" /><Pic name="lay3" on /></div></Group>
            <div className="mt-[18px] flex items-center"><span className="w-[21px]">Width</span><Field label="Width" value="1,0000 m" w="w-[50px]" /></div>
            <Group title="Height">
              <div className="flex items-start gap-1 pl-[2px]"><Drop label="Height mode" value="Total" w="w-[46px]" /><Field label="Height" value="3,0000 m" w="w-[50px]" /></div>
              <label className="mt-[2px] flex items-center gap-[3px] pl-px"># Of Flights<Field label="Flights" value="1" w="w-[30px]" /></label>
            </Group>
            <div className="mt-px"><Disabled label="Beam Height" value="0,2000 m" /><Disabled label={<>S<u>R</u> Thickness</>} value="0,1000 m" /><Disabled label="Ramp Height" value="0,2500 m" /></div>
            <Group title="Step Calculation">
              <Choice label="Riser" value="0,2000 m" w="w-[50px]" on /><Choice label="Tread" value="0,2500 m" w="w-[50px]" /><Choice label="# Of Steps" value="16" w="w-[30px]" />
            </Group>
            <Group title="Landing Extension"><div className="h-4" /></Group>
          </div>
          <span className="absolute right-0 bottom-px"><Sizer /></span>
        </div>
        <Bar title="Objects" />
        <List lead="check" rows={[["", "ghost", "Object 1"], ["", "eye", "Object 2"]]} blanks={1} height="h-[64px]" />
        <Bar title="Layers" />
        <List lead="red" rows={[["red", "eye", "Layer 1"]]} blanks={0} height="h-[27px]" />
      </div>
      <div className="flex w-[7px] flex-col items-center pt-[2px]"><Chevron up /><span className="mt-[4px] h-[301px] w-full bg-[#cdcdcd]" /><span className="mt-auto"><Chevron /></span></div>
    </div>
  </aside>
);

/* ---------- top tool bars ---------- */

const Strip = ({ children }: Kids) => <div className="flex shrink-0 items-center border border-[#b4b4b4] bg-[#f0f0f0] px-[2px]">{children}</div>;
const Grip = () => <div className="flex w-[11px] shrink-0 items-start justify-center bg-linear-to-b from-[#f0f0f0] to-[#d0d0d0] pt-[2px]"><Cross /></div>;

const views: [string, string, string, boolean][] = [
  ["TOP", "#3aa040", "#c03048", false], ["BOT", "#3aa040", "#c03048", true], ["RGT", "#333fc0", "#3aa040", true],
  ["LFT", "#333fc0", "#3aa040", false], ["BAK", "#333fc0", "#c03048", true], ["FRT", "#333fc0", "#c03048", false],
];

const TopBars = () => (
  <section className={`${frame} -top-[3px] left-[15px] flex h-[46px] w-[665px]`}>
    <div className="flex w-[14px] shrink-0 flex-col items-center justify-between bg-linear-to-r from-[#9dbbdd] to-[#c2d6ec] py-1"><CloseBox /><Tri right /></div>
    <div className="flex min-w-0 flex-1 flex-col pt-[2px]">
      <div className="flex h-[20px] shrink-0">
        <Grip />
        <Strip>
          {["open", "open2", "closef", "copyf", "save"].map((n) => <Tool key={n} name={n} />)}<Sep />
          <Tool name="undo" /><Tool name="redo" /><Sep /><Tool name="cut" /><Tool name="dup" /><Tool name="bin" />
        </Strip>
        <Grip />
        <Strip><Tool name="axis" on /><Tool name="plane" on /><Sep /><Tool name="ring" /><Tool name="donut" on /><Tool name="half" /><Sep /><Tool name="wcube" /></Strip>
        <Grip />
        <Strip>
          <Tool name="view3" on />
          {views.map(([t, a, b, f]) => <button type="button" key={t} aria-label={t} className="flex size-4 items-center justify-center"><ViewBadge label={t} a={a} b={b} flip={f} /></button>)}
          <Tool name="eyecube" /><Tool name="eyeball" /><Sep />
          {["orbit", "look", "turn", "eyecam", "hand", "loupe", "winz", "wing", "fit"].map((n) => <Tool key={n} name={n} />)}<Sep /><Tool name="snap" />
        </Strip>
      </div>
      <div className="flex h-[20px] shrink-0">
        <Grip />
        <div className="flex w-[527px] gap-[4px] border border-t-0 border-[#b4b4b4] px-[2px] pt-[2px]">
          {[["X", "4,9200 m"], ["Y", "27,8380 m"], ["Z", "0,0000 m"]].map(([a, v]) => (
            <label key={a} className="flex items-start gap-[2px]"><span className="w-[4px] pt-[2px]">{a}</span><Field label={a} value={v} w="w-[50px]" /></label>
          ))}
          <span className="pt-[2px]"><Drop label="Mode" value="3D" w="w-[46px]" /></span><Sep />
          <span className="ml-auto self-end pb-px"><Sizer /></span>
        </div>
      </div>
    </div>
  </section>
);

const Logo = () => (
  <svg viewBox="0 0 24 24" className="size-[10px] shrink-0" aria-hidden="true"><path d="M2 2h20v20H2z" fill="#f4d9a0" /><path d="M3 4h15L7 19h14" fill="none" stroke="#d98a10" strokeWidth="4" /></svg>
);

const sideTools = ["arrow", "vline", "dome", "cube", "revolve", "stairs", "vase", "blob", "dims", "person", "slabs", "measure", "bucket", "trash"];

const SideStrip = ({ children }: Kids) => <div className="flex w-[13px] shrink-0 flex-col items-center justify-start gap-[4px] bg-linear-to-b from-[#8fb0d6] to-[#c2d6ec] pt-[4px]">{children}</div>;

export default function App() {
  return (
    <div className="flex h-screen flex-col overflow-hidden bg-[#ababab] font-['DejaVu_Sans_Condensed','DejaVu_Sans',sans-serif] text-[6px] leading-[9px] text-[#222]">
      <header className="shrink-0 bg-white font-['Open_Sans',sans-serif] text-[7px] text-[#111]">
        <div className="flex h-[9px] items-center gap-[3px] pl-[4px]">
          <Logo /><h1 className="flex-1">form-Z® Free</h1>
          <div className="flex items-center gap-[22px] pr-[6px]">
            {["M0 4h8", "M1 1h6v6H1z", "M1 1l6 6M7 1L1 7"].map((d, i) => (
              <button type="button" key={d} aria-label={["Minimise", "Maximise", "Close"][i]}><svg viewBox="0 0 8 8" className="size-[7px]"><path d={d} fill="none" stroke="#222" /></svg></button>
            ))}
          </div>
        </div>
        <nav className="flex h-[17px] items-center gap-[9px] pt-[4px] pl-[4px]">
          {["File", "Edit", "Window", "View", "Display", "Palettes", "Extensions", "Help"].map((m) => <button type="button" key={m}>{m}</button>)}
        </nav>
      </header>

      <main className="relative flex-1">
        <section className="absolute top-[43px] right-[231px] bottom-[10px] left-[44px] flex flex-col rounded-t-[3px] border border-[#2f5563] bg-[#a9cdee]">
          <header className="flex h-[17px] shrink-0 items-center gap-[3px] bg-linear-to-b from-[#94b3d7] to-[#c0d4ea] pr-[7px] pl-[4px] font-['Open_Sans',sans-serif] text-[7px]">
            <Logo /><h2 className="flex-1">Untitled1 - 1*</h2>
            <div className="flex gap-px">
              {["M6 9h8v2H6z", "M7 4h7v8H7zM9 7h3v2H9z", "M7 5l7 6M14 5l-7 6"].map((d, i) => (
                <button type="button" key={d} aria-label={["Minimise", "Restore", "Close"][i]} className={`h-[11px] w-[20px] rounded-[2px] border ${i === 2 ? "border-[#7a2a2a] bg-linear-to-b from-[#e0857a] to-[#b83a2c]" : "border-[#6d87a6] bg-linear-to-b from-[#c8dbf0] to-[#9db9da]"}`}>
                  <svg viewBox="0 0 20 16" className="size-full"><path d={d} fill="none" stroke="#fff" strokeWidth="2" /></svg>
                </button>
              ))}
            </div>
          </header>
          <div className="min-h-0 flex-1 pr-[6px] pb-[3px] pl-[4px]"><Scene /></div>
        </section>

        <section className={`${frame} top-[40px] bottom-[8px] left-[3px] flex w-[41px] flex-col`}>
          <header className="flex h-[14px] shrink-0 items-center justify-between bg-linear-to-b from-[#9dbbdd] to-[#c2d6ec] px-[3px]"><Tri /><CloseBox /></header>
          <div className="flex flex-1 flex-col px-[5px]">
            {sideTools.map((n) => (
              <button type="button" key={n} aria-label={n} className={`flex flex-1 items-center justify-center ${n === "stairs" ? "rounded-[3px] border-[1px] border-[#e0202c] bg-[#d9d6da]" : ""}`}><Icon name={n} className="size-6" /></button>
            ))}
          </div>
        </section>

        <TopBars />

        <Palette title="Pick" place="top-[85px] left-[64px] h-[51px] w-[45px]"><ToolGrid items={[["arrow", "Pick"]]} /></Palette>
        <Palette title="Draw" place="top-[119px] left-[131px] h-[51px] w-[251px]">
          <ToolGrid items={[["rect", "Rectangle"], ["polygon", "Polygon"], ["circle", "Circle 1"], ["vline", "V-Line"], ["bz", "Bz Spline"], ["pt", "Pt Spline"], ["arc", "Arc 1"]]} />
        </Palette>
        <Palette title="Derive" place="top-[187px] left-[171px] h-[51px] w-[354px]">
          <ToolGrid items={[["wire", "Derv Segt"], ["face", "Derv Face"], ["wall2", "2D Wall"], ["extr", "Extrusion"], ["pnt", "Pnt Extr"], ["wall3", "3D Wall"], ["revolve", "Revolve"], ["ofst", "Ofst Surf"], ["thick", "Thicken"], ["unfold", "Unfold"]]} />
        </Palette>
        <Palette title="Modify" place="top-[262px] left-[54px] h-[51px] w-[217px]">
          <ToolGrid pad="pr-[9px]" items={[["union", "Union"], ["inter", "Intersect"], ["diff", "Diffrnc"], ["split", "B-Split"], ["stitch", "Stitch"], ["section", "Section"]]} />
        </Palette>

        <section className={`${frame} bottom-[30px] left-[46px] flex h-[25px] w-[220px]`}>
          <SideStrip><CloseBox /></SideStrip>
          <div className="flex items-center px-px">
            <Tool name="plane" on /><Tool name="pole" /><Tool name="grid" /><Tool name="dim" />
            <Field label="Grid spacing" value="1,0000 m" w="w-[50px]" /><Field label="Subdivisions" value="2" w="w-[28px]" /><Sep />
            <Tool name="warn" /><Tool name="cluster" /><Tool name="redgrid" />
          </div>
        </section>

        <section className={`${frame} bottom-[30px] left-[266px] flex h-[25px] w-[284px]`}>
          <SideStrip><CloseBox /></SideStrip>
          <div className="flex items-center pl-[2px]">
            <Tool name="planer" /><Field label="Snap distance" value="0,5000 m" w="w-[50px]" off /><Field label="Snap angle" value="5°" w="w-[28px]" off /><Sep />
            <Tool name="snapx" on /><Tool name="angle" /><Field label="Angle" value="30°" w="w-[28px]" off /><Sep />
            <Tool name="no" /><Tool name="dot" on /><Tool name="seg" on /><Tool name="dots3" on /><Tool name="mid" on /><Tool name="cross" />
          </div>
        </section>

        <section className={`${frame} bottom-[11px] left-[554px] flex h-[41px] w-[181px] overflow-hidden`}>
          <SideStrip><CloseBox /><h2 className="rotate-180 font-['Open_Sans',sans-serif] text-[7px] font-semibold [writing-mode:vertical-rl]">Action</h2></SideStrip>
          <div className="flex items-start gap-[3px] pt-[3px] pl-[2px] whitespace-nowrap">
            <span className="flex size-7 shrink-0 items-center justify-center rounded-[3px] border border-[#e0202c] bg-[#d9d6da]"><Icon name="stairs" className="size-6" /></span>
            <div><p className="border-b border-[#c4c4c4]">Stair from Path:&nbsp;&nbsp; Creates a stair from a path ob</p><p>Click: Select path object</p><p>Shift + click: Selects multiple entities</p></div>
          </div>
        </section>

        <Dock />

        <div role="tooltip" className="absolute top-[135px] right-[158px] w-[80px] overflow-hidden border border-l-0 border-[#d8383e] bg-[#f3eef0] py-[2px] text-right whitespace-nowrap text-[#7c2026]"><span className="pr-[2px]">st be a single curve object.</span></div>
      </main>
    </div>
  );
}
